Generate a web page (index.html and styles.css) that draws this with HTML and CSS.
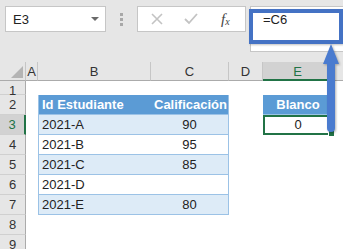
FILE: index.html
```html
<!DOCTYPE html>
<html lang="es">
<head>
    <meta charset="UTF-8">
    <title>Blanco</title>
    <link rel="stylesheet" href="styles.css">
</head>
<body>
    <!-- Formula bar -->
    <div class="topbar">
        <div class="namebox">
            <span>E3</span>
            <span class="caret"></span>
        </div>
        <div class="grip"><i></i><i></i><i></i></div>
        <div class="fx-buttons">
            <svg class="btn-icon" width="12" height="12" viewBox="0 0 12 12">
                <path d="M1 1 L11 11 M11 1 L1 11" stroke="#c3c3c3" stroke-width="1.6" fill="none"/>
            </svg>
            <svg class="btn-icon" width="14" height="12" viewBox="0 0 14 12">
                <path d="M1 6 L5 10 L13 1" stroke="#c3c3c3" stroke-width="1.8" fill="none"/>
            </svg>
            <span class="fx">f<sub>x</sub></span>
        </div>
        <div class="formula">=C6</div>
        <div class="highlight"></div>
    </div>

    <!-- Sheet -->
    <div class="sheet">
        <div class="corner"><span class="tri"></span></div>
        <div class="colhead">A</div>
        <div class="colhead">B</div>
        <div class="colhead">C</div>
        <div class="colhead">D</div>
        <div class="colhead sel">E</div>
        <div class="colhead last"></div>

        <div class="rowhead">1</div>
        <div></div><div></div><div></div><div></div><div></div><div></div>

        <div class="rowhead">2</div>
        <div></div>
        <div class="th first">Id Estudiante</div>
        <div class="th num">Calificación</div>
        <div></div>
        <div class="th solo">Blanco</div>
        <div></div>

        <div class="rowhead sel">3</div>
        <div></div>
        <div class="td odd first">2021-A</div>
        <div class="td odd num">90</div>
        <div></div>
        <div class="active">0<span class="handle"></span></div>
        <div></div>

        <div class="rowhead">4</div>
        <div></div>
        <div class="td first">2021-B</div>
        <div class="td num">95</div>
        <div></div><div></div><div></div>

        <div class="rowhead">5</div>
        <div></div>
        <div class="td odd first">2021-C</div>
        <div class="td odd num">85</div>
        <div></div><div></div><div></div>

        <div class="rowhead">6</div>
        <div></div>
        <div class="td first">2021-D</div>
        <div class="td num"></div>
        <div></div><div></div><div></div>

        <div class="rowhead">7</div>
        <div></div>
        <div class="td odd first">2021-E</div>
        <div class="td odd num">80</div>
        <div></div><div></div><div></div>

        <div class="rowhead">8</div>
        <div></div><div></div><div></div><div></div><div></div><div></div>

        <div class="rowhead">9</div>
        <div></div><div></div><div></div><div></div><div></div><div></div>
    </div>

    <!-- Pointer arrow from E3 up to the formula -->
    <svg class="arrow" width="20" height="92" viewBox="0 0 20 92">
        <path d="M11 0 L19 20 L15 20 L15 84 Q15 88 11 88 Q7 88 7 84 L7 20 L3 20 Z" fill="#4a7bcf"/>
    </svg>
</body>
</html>
```

FILE: styles.css
```css
/* General */
body { margin: 0; width: 343px; height: 249px; overflow: hidden; background: #fff; font-family: "Liberation Sans", Arial, sans-serif; font-size: 13px; color: #222; position: relative; }

/* Formula bar */
.topbar { height: 62px; background: #e6e6e6; display: flex; align-items: flex-start; padding-top: 6px; box-sizing: border-box; position: relative; }
.namebox { margin-left: 5px; width: 101px; height: 26px; box-sizing: border-box; background: #fff; border: 1px solid #c6c6c6; display: flex; align-items: center; justify-content: space-between; padding: 0 6px 0 7px; }
.caret { width: 0; height: 0; border-left: 4px solid transparent; border-right: 4px solid transparent; border-top: 4px solid #6a6a6a; }
.grip { width: 31px; height: 26px; display: flex; flex-direction: column; align-items: center; justify-content: center; gap: 2px; }
.grip i { width: 3px; height: 3px; background: #a8a8a8; }
.fx-buttons { width: 109px; height: 26px; box-sizing: border-box; background: #fff; border: 1px solid #c6c6c6; display: flex; align-items: center; padding-left: 13px; gap: 21px; }
.fx { font-family: "Liberation Serif", serif; font-style: italic; font-size: 15px; color: #444; margin-left: 2px; }
.fx sub { font-size: 10px; vertical-align: -1px; }
.formula { margin-left: 4px; flex: 1; height: 46px; box-sizing: border-box; background: #fff; border: 1px solid #c6c6c6; border-right: none; padding: 5px 0 0 12px; }
.highlight { position: absolute; left: 249px; top: 9px; width: 94px; height: 35px; box-sizing: border-box; border: 4px solid #4472c4; box-shadow: 1px 1px 2px rgba(0,0,0,0.25); }

/* Sheet grid */
.sheet { display: grid; grid-template-columns: 26px 12px 113px 78px 34px 70px 10px; grid-template-rows: 19px 14px repeat(8, 20px); }
.sheet > div { box-sizing: border-box; }
.corner { background: #e6e6e6; border-right: 1px solid #c6c6c6; border-bottom: 1px solid #ababab; position: relative; }
.tri { position: absolute; right: 2px; bottom: 2px; width: 0; height: 0; border-left: 12px solid transparent; border-bottom: 12px solid #b4b4b4; }
.colhead { background: #e6e6e6; border-right: 1px solid #c6c6c6; border-bottom: 1px solid #ababab; text-align: center; line-height: 19px; color: #333; }
.colhead.sel { background: #d2d2d2; border-bottom: 2px solid #217346; color: #217346; }
.colhead.last { border-right: none; }
.rowhead { background: #e6e6e6; border-right: 1px solid #ababab; border-bottom: 1px solid #d0d0d0; text-align: center; line-height: 19px; color: #333; }
.rowhead.sel { background: #d2d2d2; border-right: 2px solid #217346; color: #217346; }

/* Table cells */
.th, .td { border-bottom: 1px solid #9bc2e6; padding: 0 3px; line-height: 20px; white-space: nowrap; }
.th { background: #5b9bd5; color: #fff; font-weight: bold; }
.td { background: #fff; }
.td.odd { background: #ddebf7; }
.first { border-left: 1px solid #9bc2e6; }
.num { text-align: right; border-right: 1px solid #9bc2e6; padding-right: 3px; }
.num.td { text-align: center; }
.th.solo { text-align: center; }
.active { border: 2px solid #217346; text-align: center; line-height: 16px; position: relative; }
.handle { position: absolute; right: -4px; bottom: -4px; width: 5px; height: 5px; background: #217346; border: 1px solid #fff; }

/* Arrow overlay */
.arrow { position: absolute; left: 320px; top: 44px; filter: drop-shadow(1px 1px 1px rgba(0,0,0,0.3)); }
```
